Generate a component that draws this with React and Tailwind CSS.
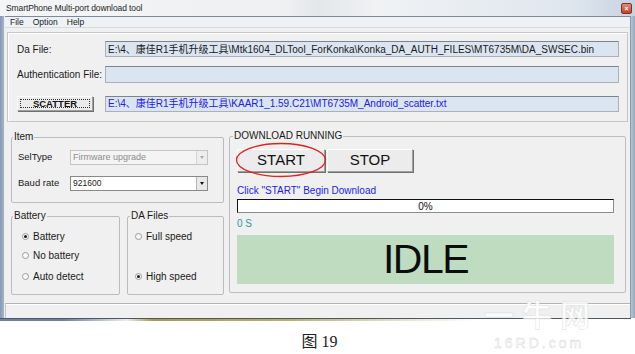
const FONT = "font-['Liberation_Sans','Noto_Sans_CJK_SC',sans-serif]";

function Radio({ checked }) {
  return (
    <span className="inline-flex w-[7px] h-[7px] rounded-full border border-[#9a9a9a] bg-[#fafafa] items-center justify-center shrink-0">
      {checked && <span className="w-[3px] h-[3px] rounded-full bg-[#1a1a1a]" />}
    </span>
  );
}

function RadioRow({ checked, label, className = "" }) {
  return (
    <div className={"flex items-center h-[12px] gap-[4px] text-[10px] text-[#1a1a1a] " + className}>
      <Radio checked={checked} />
      <span>{label}</span>
    </div>
  );
}

function Group({ title, className = "", legendClass = "", children }) {
  return (
    <fieldset className={"border border-[#bcbcbc] rounded-[2px] " + className}>
      <legend className={"px-[1px] text-[10px] leading-[12px] text-[#1a1a1a] " + legendClass}>{title}</legend>
      {children}
    </fieldset>
  );
}

function ClassicButton({ className = "", children }) {
  return (
    <div
      className={
        "flex items-center justify-center bg-[#ececec] border-t border-l border-t-[#fdfdfd] border-l-[#fdfdfd] border-r border-b border-r-[#9f9f9f] border-b-[#9f9f9f] shadow-[1px_1px_0_#707070] " +
        className
      }
    >
      {children}
    </div>
  );
}

export default function App() {
  return (
    <div className={"relative w-[635px] h-[354px] bg-white overflow-hidden " + FONT}>
      {/* Window */}
      <div className="flex flex-col h-[321px]">
        {/* Title bar */}
        <div className="flex items-center h-[16px] pl-[6px] pr-[3px] bg-[linear-gradient(to_right,#f4f5f7_0%,#eef0f2_45%,#e4e7ea_50%,#f0f2f4_60%,#dfe6ee_90%,#c7d3e1_100%)]">
          <span className="text-[8.5px] text-[#1e1e1e] tracking-[-0.1px]">SmartPhone Multi-port download tool</span>
          <div className="ml-auto flex items-center justify-center w-[11px] h-[11px] rounded-[2px] bg-[linear-gradient(#e08a78,#c2412d)] border border-[#8a3022]">
            <span className="text-[7px] leading-none text-white font-bold">×</span>
          </div>
        </div>

        <div className="flex flex-1">
          {/* left frame */}
          <div className="w-[5px] bg-[linear-gradient(to_right,#8698b2,#a7b5c8)] border-r border-r-[#e9edf2]" />

          <div className="flex flex-col flex-1">
            {/* menu */}
            <div className="border-t border-t-[#7d8a99] h-[12px] bg-[#eef2f7] flex items-center gap-[9px] pl-[5px] text-[8.5px] text-[#1a1a1a] border-b border-b-[#d6dbe2]">
              <span>File</span>
              <span>Option</span>
              <span>Help</span>
            </div>

            {/* content */}
            <div className="flex flex-col flex-1 bg-[#f0f0f0]">
              {/* top panel */}
              <div className="mt-[4px] mx-[2px] h-[90px] border border-[#c6c6c6] shadow-[inset_1px_1px_0_#ffffff] flex flex-col pl-[9px] pr-[8px] pt-[8px]">
                <div className="flex items-center h-[16px]">
                  <span className="w-[88px] text-[10px] text-[#1a1a1a]">Da File:</span>
                  <div className="flex-1 h-[16px] bg-[#dbe5f1] border border-[#a9b1bb] border-t-[#7e848c] flex items-center pl-[2px] text-[10px] text-[#1a1a1a] whitespace-nowrap overflow-hidden">
                    {"E:\\4、康佳R1手机升级工具\\Mtk1604_DLTool_ForKonka\\Konka_DA_AUTH_FILES\\MT6735M\\DA_SWSEC.bin"}
                  </div>
                </div>
                <div className="flex items-center h-[17px] mt-[9px]">
                  <span className="w-[88px] text-[10px] text-[#1a1a1a]">Authentication File:</span>
                  <div className="flex-1 h-[17px] bg-[#dbe5f1] border border-[#a9b1bb] border-t-[#7e848c]" />
                </div>
                <div className="flex items-center h-[15px] mt-[13px]">
                  <div className="w-[88px]">
                    <ClassicButton className="w-[76px] h-[15px] p-[2px]">
                      <div className="w-full h-full border border-dotted border-[#333] flex items-center justify-center text-[9.5px] font-bold text-[#111] leading-none">
                        SCATTER
                      </div>
                    </ClassicButton>
                  </div>
                  <div className="flex-1 h-[16px] bg-[#dbe5f1] border border-[#a9b1bb] border-t-[#7e848c] flex items-center pl-[2px] text-[10px] text-[#2020e8] whitespace-nowrap overflow-hidden">
                    {"E:\\4、康佳R1手机升级工具\\KAAR1_1.59.C21\\MT6735M_Android_scatter.txt"}
                  </div>
                </div>
              </div>

              {/* lower row */}
              <div className="flex pl-[6px]">
                {/* left column */}
                <div className="flex flex-col w-[213px] mt-[9px]">
                  <Group title="Item" className="h-[72px] pl-[6px] pr-[15px]" legendClass="-ml-[5px]">
                    <div className="flex items-center h-[15px] mt-[7px]">
                      <span className="w-[52px] text-[9.5px] text-[#1a1a1a]">SelType</span>
                      <div className="flex-1 h-[15px] bg-[#f4f4f4] border border-[#c4c4c4] flex items-center">
                        <span className="flex-1 pl-[2px] text-[9px] text-[#8c8c8c]">Firmware upgrade</span>
                        <div className="w-[11px] h-[13px] bg-[#ededed] border-l border-[#d6d6d6] flex items-center justify-center">
                          <span className="w-0 h-0 border-l-[2.5px] border-r-[2.5px] border-t-[3px] border-l-transparent border-r-transparent border-t-[#a8a8a8]" />
                        </div>
                      </div>
                    </div>
                    <div className="flex items-center h-[15px] mt-[11px]">
                      <span className="w-[52px] text-[9.5px] text-[#1a1a1a]">Baud rate</span>
                      <div className="flex-1 h-[15px] bg-white border border-[#8a8a8a] flex items-center">
                        <span className="flex-1 pl-[2px] text-[8.5px] text-[#1a1a1a]">921600</span>
                        <div className="w-[11px] h-[13px] bg-[#e8e8e8] border-l border-[#b8b8b8] flex items-center justify-center">
                          <span className="w-0 h-0 border-l-[2.5px] border-r-[2.5px] border-t-[3px] border-l-transparent border-r-transparent border-t-[#111]" />
                        </div>
                      </div>
                    </div>
                  </Group>

                  <div className="flex gap-[7px] mt-[7px]">
                    <Group title="Battery" className="w-[109px] h-[85px] pl-[10px]" legendClass="-ml-[9px]">
                      <RadioRow checked label="Battery" className="mt-[8px]" />
                      <RadioRow label="No battery" className="mt-[7px]" />
                      <RadioRow label="Auto detect" className="mt-[9px]" />
                    </Group>
                    <Group title="DA Files" className="w-[97px] h-[85px] pl-[7px]" legendClass="-ml-[5px]">
                      <RadioRow label="Full speed" className="mt-[8px]" />
                      <RadioRow checked label="High speed" className="mt-[28px]" />
                    </Group>
                  </div>
                </div>

                {/* right group */}
                <Group title="DOWNLOAD RUNNING" className="w-[397px] h-[163px] ml-[5px] mt-[8px] pl-[7px]" legendClass="-ml-[4px]">
                  <div className="relative flex gap-[2px] mt-[7px]">
                    <ClassicButton className="w-[88px] h-[23px] text-[15px] text-[#111]">START</ClassicButton>
                    <ClassicButton className="w-[86px] h-[23px] text-[15px] text-[#111]">STOP</ClassicButton>
                    <svg className="absolute left-[-2px] top-[-7px]" width="92" height="36" viewBox="0 0 92 36">
                      <ellipse cx="46" cy="18" rx="44.5" ry="16.5" fill="none" stroke="#e2201c" strokeWidth="1.3" />
                    </svg>
                  </div>
                  <div className="mt-[12px] h-[12px] flex items-center text-[10px] text-[#1b1bf0]">Click "START" Begin Download</div>
                  <div className="mt-[3px] w-[377px] h-[14px] bg-white border-t border-l border-t-[#111] border-l-[#111] border-r border-b border-r-[#8c8c8c] border-b-[#8c8c8c] flex items-center justify-center text-[10px] text-[#111]">
                    0%
                  </div>
                  <div className="mt-[4px] h-[12px] flex items-center text-[10px] text-[#2b9a9a]">0 S</div>
                  <div className="mt-[6px] w-[377px] h-[49px] bg-[#c0dcc0] flex items-center justify-center">
                    <span className="text-[41px] leading-none text-[#0c0c0c] tracking-[-1.5px]">IDLE</span>
                  </div>
                </Group>
              </div>

              {/* status bar */}
              <div className="mt-auto h-[15px] border-t border-t-[#b4b4b4] shadow-[inset_0_1px_0_#ffffff] border-l border-l-[#c8c8c8]" />
            </div>
          </div>

          {/* right frame */}
          <div className="w-[5px] bg-[linear-gradient(to_right,#b7c4d4,#97a8bf)] border-l border-l-[#8e9aa9]" />
        </div>

        {/* bottom frame */}
        <div className="h-[1px] bg-[#4e5763] mr-[4px]" />
        <div className="h-[2px] bg-[linear-gradient(to_right,#6f819c_0%,#6f819c_10%,#eceeef_20%,#a49c56_24%,#b4ae72_45%,#e9e7d6_65%,#ffffff_75%)]" />
      </div>

      {/* caption */}
      <div className="flex justify-center pl-[4px] mt-[12px]">
        <span className="text-[16px] leading-[18px] text-[#222] font-['Liberation_Serif','Noto_Sans_CJK_SC',serif]">图 19</span>
      </div>

      {/* watermark */}
      <div className="absolute left-[484px] top-[297px] text-[30px] font-bold text-white opacity-80 [-webkit-text-stroke:0.5px_#d8d8d8] font-['Noto_Sans_CJK_SC',sans-serif] tracking-[8px] leading-[32px]">
        一牛网
      </div>
      <div className="absolute left-[494px] top-[336px] text-[14px] leading-[14px] text-white [-webkit-text-stroke:0.5px_#dadada] tracking-[3px]">
        16RD.com
      </div>
    </div>
  );
}
